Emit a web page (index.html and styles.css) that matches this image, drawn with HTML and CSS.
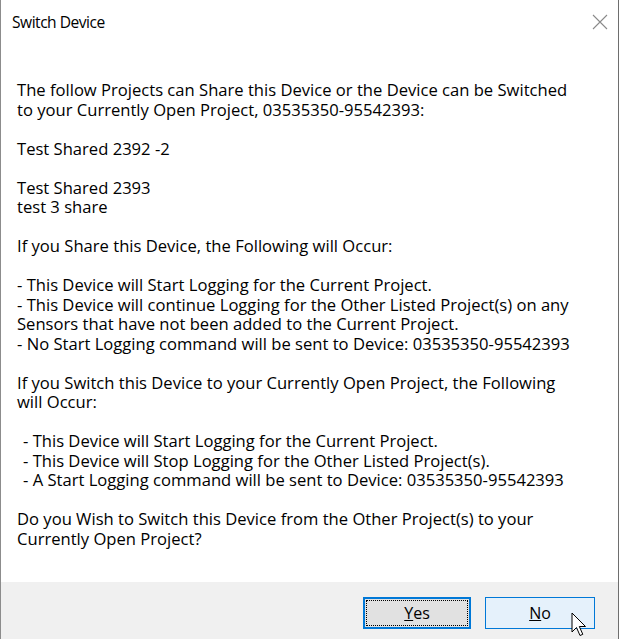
FILE: index.html
```html
<!DOCTYPE html>
<html>
<head>
<meta charset="utf-8">
<link rel="stylesheet" href="styles.css">
</head>
<body>
<div class="window">
  <div class="titlebar">
    <span class="title">Switch Device</span>
    <svg class="close" width="16" height="16" viewBox="0 0 16 16"><path d="M1 1 L15 15 M15 1 L1 15" stroke="#8a8a8a" stroke-width="1.1" fill="none"/></svg>
  </div>
  <div class="content">
    <p>The follow Projects can Share this Device or the Device can be Switched<br>to your Currently Open Project, 03535350-95542393:</p>
    <p>Test Shared 2392 -2</p>
    <p>Test Shared 2393<br>test 3 share</p>
    <p>If you Share this Device, the Following will Occur:</p>
    <p>- This Device will Start Logging for the Current Project.<br>- This Device will continue Logging for the Other Listed Project(s) on any<br>Sensors that have not been added to the Current Project.<br>- No Start Logging command will be sent to Device: 03535350-95542393</p>
    <p>If you Switch this Device to your Currently Open Project, the Following<br>will Occur:</p>
    <p class="indent">- This Device will Start Logging for the Current Project.<br>- This Device will Stop Logging for the Other Listed Project(s).<br>- A Start Logging command will be sent to Device: 03535350-95542393</p>
    <p>Do you Wish to Switch this Device from the Other Project(s) to your<br>Currently Open Project?</p>
  </div>
  <div class="footer">
    <button class="btn btn-default"><span class="focus"><u>Y</u>es</span></button>
    <button class="btn btn-hover"><u>N</u>o</button>
  </div>
</div>
<svg class="cursor" width="16" height="26" viewBox="0 0 16 26"><path d="M1 1 L1 20 L5.5 15.5 L9 23.5 L11.8 22.3 L8.3 14.5 L14.5 14.5 Z" fill="#fff" stroke="#000" stroke-width="1" stroke-linejoin="miter"/></svg>
</body>
</html>
```

FILE: styles.css
```css
html, body {
  margin: 0;
  padding: 0;
  background: #ffffff;
}
body {
  width: 622px;
  height: 639px;
  overflow: hidden;
  position: relative;
  font-family: "Open Sans", "Noto Sans", sans-serif;
  color: #000;
}
.window {
  width: 617px;
  height: 639px;
  border-left: 1px solid #8c8c8c;
  border-right: 1px solid #6e6e6e;
  display: flex;
  flex-direction: column;
  background: #fff;
  box-sizing: content-box;
}
.titlebar {
  height: 44px;
  display: flex;
  align-items: center;
  justify-content: space-between;
  padding: 0 10px 0 11px;
}
.title {
  font-size: 15.6px;
  letter-spacing: -0.5px;
}
.content {
  flex: 1;
  padding: 36px 0 0 16px;
  font-size: 16.6px;
  line-height: 19.5px;
}
.content p {
  margin: 0 0 19.5px 0;
  white-space: nowrap;
}
.content p.indent {
  padding-left: 6px;
}
.footer {
  height: 57px;
  background: #f0f0f0;
  display: flex;
  justify-content: flex-end;
  align-items: flex-start;
  gap: 14px;
  padding: 15px 23px 0 0;
  box-sizing: border-box;
}
.btn {
  height: 32px;
  font-family: inherit;
  font-size: 16px;
  color: #000;
  margin: 0;
  padding: 0;
  box-sizing: border-box;
  display: flex;
  align-items: center;
  justify-content: center;
}
.btn-default {
  width: 108px;
  background: #e1e1e1;
  border: 2px solid #0078d7;
  padding: 1px;
}
.btn-default .focus {
  flex: 1;
  align-self: stretch;
  display: flex;
  align-items: center;
  justify-content: center;
  border: 1px dotted #000;
}
.btn-hover {
  width: 110px;
  background: #e5f1fb;
  border: 1px solid #0078d7;
}
.cursor {
  position: absolute;
  left: 571px;
  top: 612px;
}
```
